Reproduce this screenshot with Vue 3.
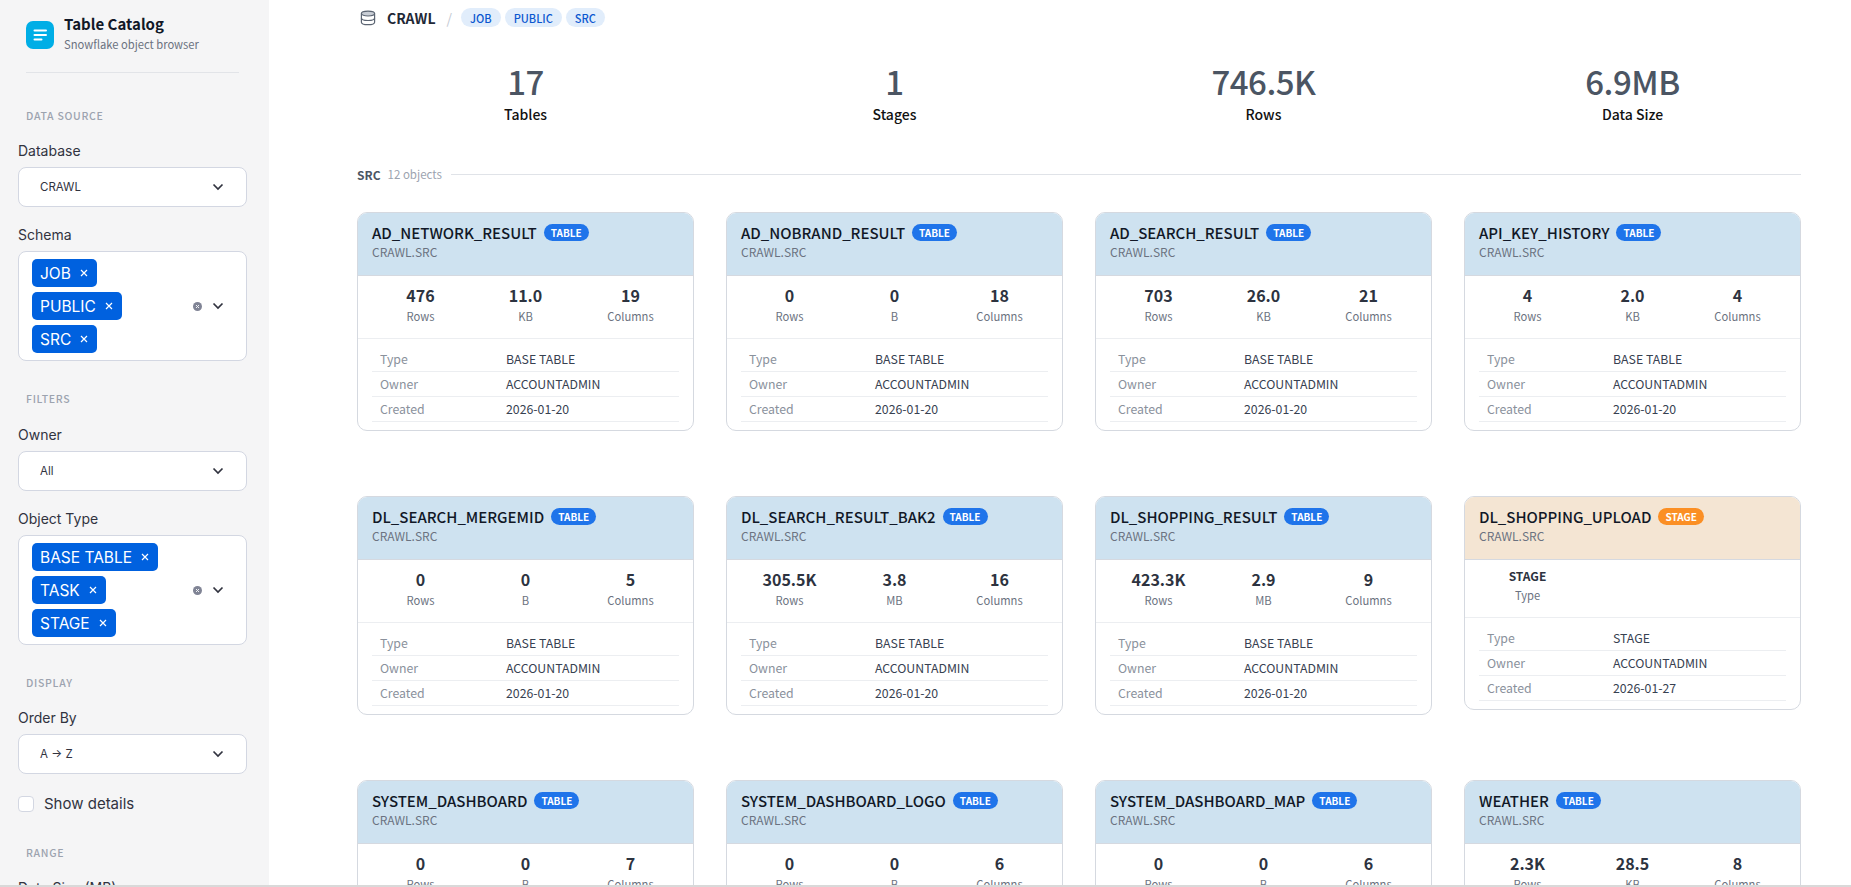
<template>
  <div class="app">
    <div class="page">
      <aside class="sidebar">
        <div class="brand">
          <div class="logo">
            <svg width="28" height="28" viewBox="0 0 28 28">
              <rect x="7.5" y="8.5" width="13.5" height="2" rx="1" fill="#fff" />
              <rect x="7.5" y="13" width="13.5" height="2" rx="1" fill="#fff" />
              <rect x="7.5" y="17.5" width="9" height="2" rx="1" fill="#fff" />
            </svg>
          </div>
          <div>
            <div class="brand-title">Table Catalog</div>
            <div class="brand-sub">Snowflake object browser</div>
          </div>
        </div>

        <div class="side-head first">DATA SOURCE</div>
        <label class="field-label">Database</label>
        <div class="select">
          <span class="select-text">CRAWL</span>
          <svg class="chev" width="12" height="8" viewBox="0 0 12 8"><path d="M1.5 1.5 6 6l4.5-4.5" fill="none" stroke="#31333f" stroke-width="1.7" /></svg>
        </div>

        <label class="field-label next">Schema</label>
        <div class="multi">
          <div class="tags">
            <span v-for="t in schemas" :key="t" class="tag">{{ t }}<svg width="8" height="8" viewBox="0 0 8 8"><path d="M1 1l6 6M7 1 1 7" stroke="#fff" stroke-width="1.2" /></svg></span>
          </div>
          <svg class="clear" width="9" height="9" viewBox="0 0 9 9"><circle cx="4.5" cy="4.5" r="4.5" fill="#808495" /><path d="M3 3l3 3M6 3 3 6" stroke="#f0f2f6" stroke-width="1" /></svg>
          <svg class="chev" width="12" height="8" viewBox="0 0 12 8"><path d="M1.5 1.5 6 6l4.5-4.5" fill="none" stroke="#31333f" stroke-width="1.7" /></svg>
        </div>

        <div class="side-head">FILTERS</div>
        <label class="field-label wide">Owner</label>
        <div class="select">
          <span class="select-text">All</span>
          <svg class="chev" width="12" height="8" viewBox="0 0 12 8"><path d="M1.5 1.5 6 6l4.5-4.5" fill="none" stroke="#31333f" stroke-width="1.7" /></svg>
        </div>

        <label class="field-label next">Object Type</label>
        <div class="multi">
          <div class="tags">
            <span v-for="t in objectTypes" :key="t" class="tag">{{ t }}<svg width="8" height="8" viewBox="0 0 8 8"><path d="M1 1l6 6M7 1 1 7" stroke="#fff" stroke-width="1.2" /></svg></span>
          </div>
          <svg class="clear" width="9" height="9" viewBox="0 0 9 9"><circle cx="4.5" cy="4.5" r="4.5" fill="#808495" /><path d="M3 3l3 3M6 3 3 6" stroke="#f0f2f6" stroke-width="1" /></svg>
          <svg class="chev" width="12" height="8" viewBox="0 0 12 8"><path d="M1.5 1.5 6 6l4.5-4.5" fill="none" stroke="#31333f" stroke-width="1.7" /></svg>
        </div>

        <div class="side-head">DISPLAY</div>
        <label class="field-label">Order By</label>
        <div class="select">
          <span class="select-text">A → Z</span>
          <svg class="chev" width="12" height="8" viewBox="0 0 12 8"><path d="M1.5 1.5 6 6l4.5-4.5" fill="none" stroke="#31333f" stroke-width="1.7" /></svg>
        </div>

        <div class="check-row">
          <span class="check"></span>
          <span>Show details</span>
        </div>

        <div class="side-head range">RANGE</div>
        <label class="field-label">Data Size (MB)</label>
      </aside>

      <main class="main">
        <div class="crumbs">
          <svg class="db" width="16" height="16" viewBox="0 0 16 16" fill="none" stroke="#5b6472" stroke-width="1.2">
            <ellipse cx="8" cy="3.6" rx="6.6" ry="2.4" fill="#c9ced6" />
            <path d="M1.4 3.6v8.6c0 1.4 3 2.5 6.6 2.5s6.6-1.1 6.6-2.5V3.6" />
            <path d="M1.4 8c0 1.4 3 2.5 6.6 2.5s6.6-1.1 6.6-2.5" />
          </svg>
          <span class="crumb-db">CRAWL</span>
          <span class="crumb-sep">/</span>
          <span v-for="s in schemas" :key="s" class="pill">{{ s }}</span>
        </div>

        <div class="summary">
          <div v-for="m in summary" :key="m.label" class="metric">
            <div class="metric-value">{{ m.value }}</div>
            <div class="metric-label">{{ m.label }}</div>
          </div>
        </div>

        <div class="section-head">
          <b>SRC</b>
          <span class="section-count">12 objects</span>
          <span class="section-line"></span>
        </div>

        <div class="grid">
          <div v-for="o in objects" :key="o.name" class="card" :class="{ stage: o.stage }">
            <div class="card-head">
              <div class="card-title">
                <span class="card-name">{{ o.name }}</span>
                <span class="badge">{{ o.stage ? 'STAGE' : 'TABLE' }}</span>
              </div>
              <div class="card-path">CRAWL.SRC</div>
            </div>
            <div v-if="o.stage" class="card-stats">
              <div class="stat">
                <div class="stat-text">STAGE</div>
                <div class="stat-label">Type</div>
              </div>
            </div>
            <div v-else class="card-stats">
              <div class="stat">
                <div class="stat-value">{{ o.rows }}</div>
                <div class="stat-label">Rows</div>
              </div>
              <div class="stat">
                <div class="stat-value">{{ o.size }}</div>
                <div class="stat-label">{{ o.unit }}</div>
              </div>
              <div class="stat">
                <div class="stat-value">{{ o.cols }}</div>
                <div class="stat-label">Columns</div>
              </div>
            </div>
            <div class="card-details">
              <div class="row"><span class="row-key">Type</span><span>{{ o.stage ? 'STAGE' : 'BASE TABLE' }}</span></div>
              <div class="row"><span class="row-key">Owner</span><span>ACCOUNTADMIN</span></div>
              <div class="row"><span class="row-key">Created</span><span>{{ o.created }}</span></div>
            </div>
          </div>
        </div>
      </main>
    </div>
    <div class="bottom-bar"></div>
  </div>
</template>

<script setup>
const schemas = ['JOB', 'PUBLIC', 'SRC']
const objectTypes = ['BASE TABLE', 'TASK', 'STAGE']

const summary = [
  { value: '17', label: 'Tables' },
  { value: '1', label: 'Stages' },
  { value: '746.5K', label: 'Rows' },
  { value: '6.9MB', label: 'Data Size' }
]

const d = '2026-01-20'
const objects = [
  { name: 'AD_NETWORK_RESULT', rows: '476', size: '11.0', unit: 'KB', cols: 19, created: d },
  { name: 'AD_NOBRAND_RESULT', rows: '0', size: '0', unit: 'B', cols: 18, created: d },
  { name: 'AD_SEARCH_RESULT', rows: '703', size: '26.0', unit: 'KB', cols: 21, created: d },
  { name: 'API_KEY_HISTORY', rows: '4', size: '2.0', unit: 'KB', cols: 4, created: d },
  { name: 'DL_SEARCH_MERGEMID', rows: '0', size: '0', unit: 'B', cols: 5, created: d },
  { name: 'DL_SEARCH_RESULT_BAK2', rows: '305.5K', size: '3.8', unit: 'MB', cols: 16, created: d },
  { name: 'DL_SHOPPING_RESULT', rows: '423.3K', size: '2.9', unit: 'MB', cols: 9, created: d },
  { name: 'DL_SHOPPING_UPLOAD', stage: true, created: '2026-01-27' },
  { name: 'SYSTEM_DASHBOARD', rows: '0', size: '0', unit: 'B', cols: 7, created: d },
  { name: 'SYSTEM_DASHBOARD_LOGO', rows: '0', size: '0', unit: 'B', cols: 6, created: d },
  { name: 'SYSTEM_DASHBOARD_MAP', rows: '0', size: '0', unit: 'B', cols: 6, created: d },
  { name: 'WEATHER', rows: '2.3K', size: '28.5', unit: 'KB', cols: 8, created: d }
]
</script>

<style scoped>
.app {
  width: 1851px;
  height: 887px;
  display: flex;
  flex-direction: column;
  overflow: hidden;
  background: #fff;
  font-family: "Noto Sans CJK KR", "Noto Sans", sans-serif;
  color: #1f2937;
}

.page {
  flex: 1;
  min-height: 0;
  display: flex;
  overflow: hidden;
}

.bottom-bar {
  height: 2px;
  background: #d9d9d9;
}

/* Sidebar */
.sidebar {
  width: 269px;
  flex-shrink: 0;
  box-sizing: border-box;
  padding: 0 22px 0 18px;
  background: #f5f5f6;
  font-family: Inter, sans-serif;
  color: #31333f;
}

.brand {
  display: flex;
  gap: 10px;
  margin: 0 8px 0 8px;
  height: 73px;
  box-sizing: border-box;
  padding-top: 14px;
  border-bottom: 1px solid #e2e4e8;
  font-family: "Noto Sans CJK KR", sans-serif;
}

.logo {
  width: 28px;
  height: 28px;
  margin-top: 7px;
  border-radius: 7px;
  background: #00aee6;
}

.brand-title {
  font-size: 15px;
  font-weight: 600;
  line-height: 20px;
  color: #111827;
}

.brand-sub {
  margin-top: 2px;
  font-size: 11.2px;
  line-height: 17px;
  color: #6b7280;
}

.side-head {
  margin: 30px 0 0 8px;
  font-family: "Noto Sans CJK KR", sans-serif;
  font-size: 10.5px;
  font-weight: 500;
  line-height: 16px;
  letter-spacing: 0.7px;
  color: #9ca3af;
}

.side-head.first {
  margin-top: 35px;
}

.side-head.range {
  margin-top: 33px;
}

.field-label {
  display: block;
  margin-top: 17px;
  font-size: 14px;
  line-height: 20px;
  color: #31333f;
}

.field-label.next {
  margin-top: 18px;
}

.field-label.wide {
  margin-top: 18px;
}

.select {
  display: flex;
  align-items: center;
  justify-content: space-between;
  height: 40px;
  box-sizing: border-box;
  margin-top: 6px;
  padding: 0 22px 0 21px;
  background: #fff;
  border: 1px solid #d3d7e2;
  border-radius: 8px;
}

.select-text {
  font-size: 11.5px;
  color: #31333f;
}

.multi {
  display: flex;
  align-items: center;
  box-sizing: border-box;
  margin-top: 6px;
  padding: 7px 22px 7px 13px;
  background: #fff;
  border: 1px solid #d3d7e2;
  border-radius: 8px;
}

.tags {
  flex: 1;
  display: flex;
  flex-direction: column;
  align-items: flex-start;
  gap: 5px;
}

.tag {
  display: inline-flex;
  align-items: center;
  gap: 9px;
  height: 28px;
  padding: 0 9px 0 8px;
  background: #0061df;
  border-radius: 5px;
  color: #fff;
  font-size: 15.5px;
}

.clear {
  margin-right: 10px;
}

.check-row {
  display: flex;
  align-items: center;
  gap: 10px;
  margin-top: 22px;
  font-size: 15px;
  line-height: 16px;
}

.check {
  width: 16px;
  height: 16px;
  box-sizing: border-box;
  background: #fff;
  border: 1px solid #d3d7e2;
  border-radius: 4px;
}

/* Main */
.main {
  flex: 1;
  min-width: 0;
  padding: 8px 50px 0 88px;
}

.crumbs {
  display: flex;
  align-items: center;
  height: 20px;
  padding-left: 3px;
}

.db {
  margin-right: 11px;
}

.crumb-db {
  font-size: 14px;
  font-weight: 600;
  color: #1f2937;
}

.crumb-sep {
  margin: 0 9px 0 11px;
  font-size: 14px;
  color: #c5cad3;
}

.pill {
  display: flex;
  align-items: center;
  height: 19px;
  margin: 0 4px 1px 0;
  padding: 0 9px;
  border-radius: 10px;
  background: #e1edfb;
  color: #0b57d0;
  font-size: 11px;
  font-weight: 500;
}

.summary {
  display: grid;
  grid-template-columns: repeat(4, 369px);
  margin: 30px -16px 0;
  text-align: center;
}

.metric-value {
  font-size: 33px;
  font-weight: 500;
  line-height: 46px;
  letter-spacing: -0.5px;
  color: #4b5563;
}

.metric-label {
  margin-top: 0;
  font-size: 14px;
  font-weight: 500;
  line-height: 20px;
  color: #111;
}

.section-head {
  display: flex;
  align-items: center;
  margin-top: 40px;
  height: 20px;
  font-size: 12px;
  color: #4b5563;
}

.section-head b {
  font-weight: 600;
}

.section-count {
  margin-left: 7px;
  font-size: 11.5px;
  color: #9ca3af;
}

.section-line {
  flex: 1;
  height: 1px;
  margin-left: 9px;
  background: #e0e3e8;
}

.grid {
  display: grid;
  grid-template-columns: repeat(4, 337px);
  column-gap: 32px;
  row-gap: 65px;
  align-items: start;
  margin-top: 28px;
}

.card {
  box-sizing: border-box;
  border: 1px solid #d5d9e0;
  border-radius: 10px;
  overflow: hidden;
  background: #fff;
}

.card-head {
  height: 63px;
  box-sizing: border-box;
  padding: 9px 14px 0;
  background: #cee2f0;
  border-bottom: 1px solid #d5d9e0;
}

.card.stage .card-head {
  background: #f4e5d3;
}

.card-title {
  display: flex;
  align-items: center;
  gap: 7px;
  height: 21px;
}

.card-name {
  font-size: 15px;
  font-weight: 500;
  color: #111827;
}

.badge {
  display: flex;
  align-items: center;
  height: 17px;
  padding: 0 7px;
  border-radius: 9px;
  background: #1f74ea;
  color: #fff;
  font-size: 10px;
  font-weight: 600;
}

.card.stage .badge {
  background: #fb8f24;
}

.card-path {
  margin-top: 0;
  font-size: 12px;
  line-height: 18px;
  color: #6b7280;
}

.card-stats {
  display: grid;
  grid-template-columns: repeat(3, 105px);
  height: 63px;
  box-sizing: border-box;
  padding: 7px 0 0 10px;
  border-bottom: 1px solid #eceef1;
  text-align: center;
}

.card.stage .card-stats {
  height: 58px;
  padding-top: 6px;
}

.stat-value {
  font-size: 16px;
  font-weight: 600;
  line-height: 24px;
  color: #2d3340;
}

.stat-text {
  font-size: 12px;
  font-weight: 600;
  line-height: 20px;
  color: #2d3340;
}

.stat-label {
  margin-top: 0;
  font-size: 11.2px;
  line-height: 18px;
  color: #6b7280;
}

.card-details {
  padding: 8px 14px 8px;
  font-size: 12.3px;
  color: #374151;
}

.row {
  display: flex;
  align-items: center;
  height: 25px;
  box-sizing: border-box;
  padding-left: 8px;
  border-bottom: 1px solid #eceef1;
}

.row-key {
  width: 126px;
  color: #8a919c;
}
</style>

<style>
html, body {
  margin: 0;
  overflow: hidden;
}
</style>
